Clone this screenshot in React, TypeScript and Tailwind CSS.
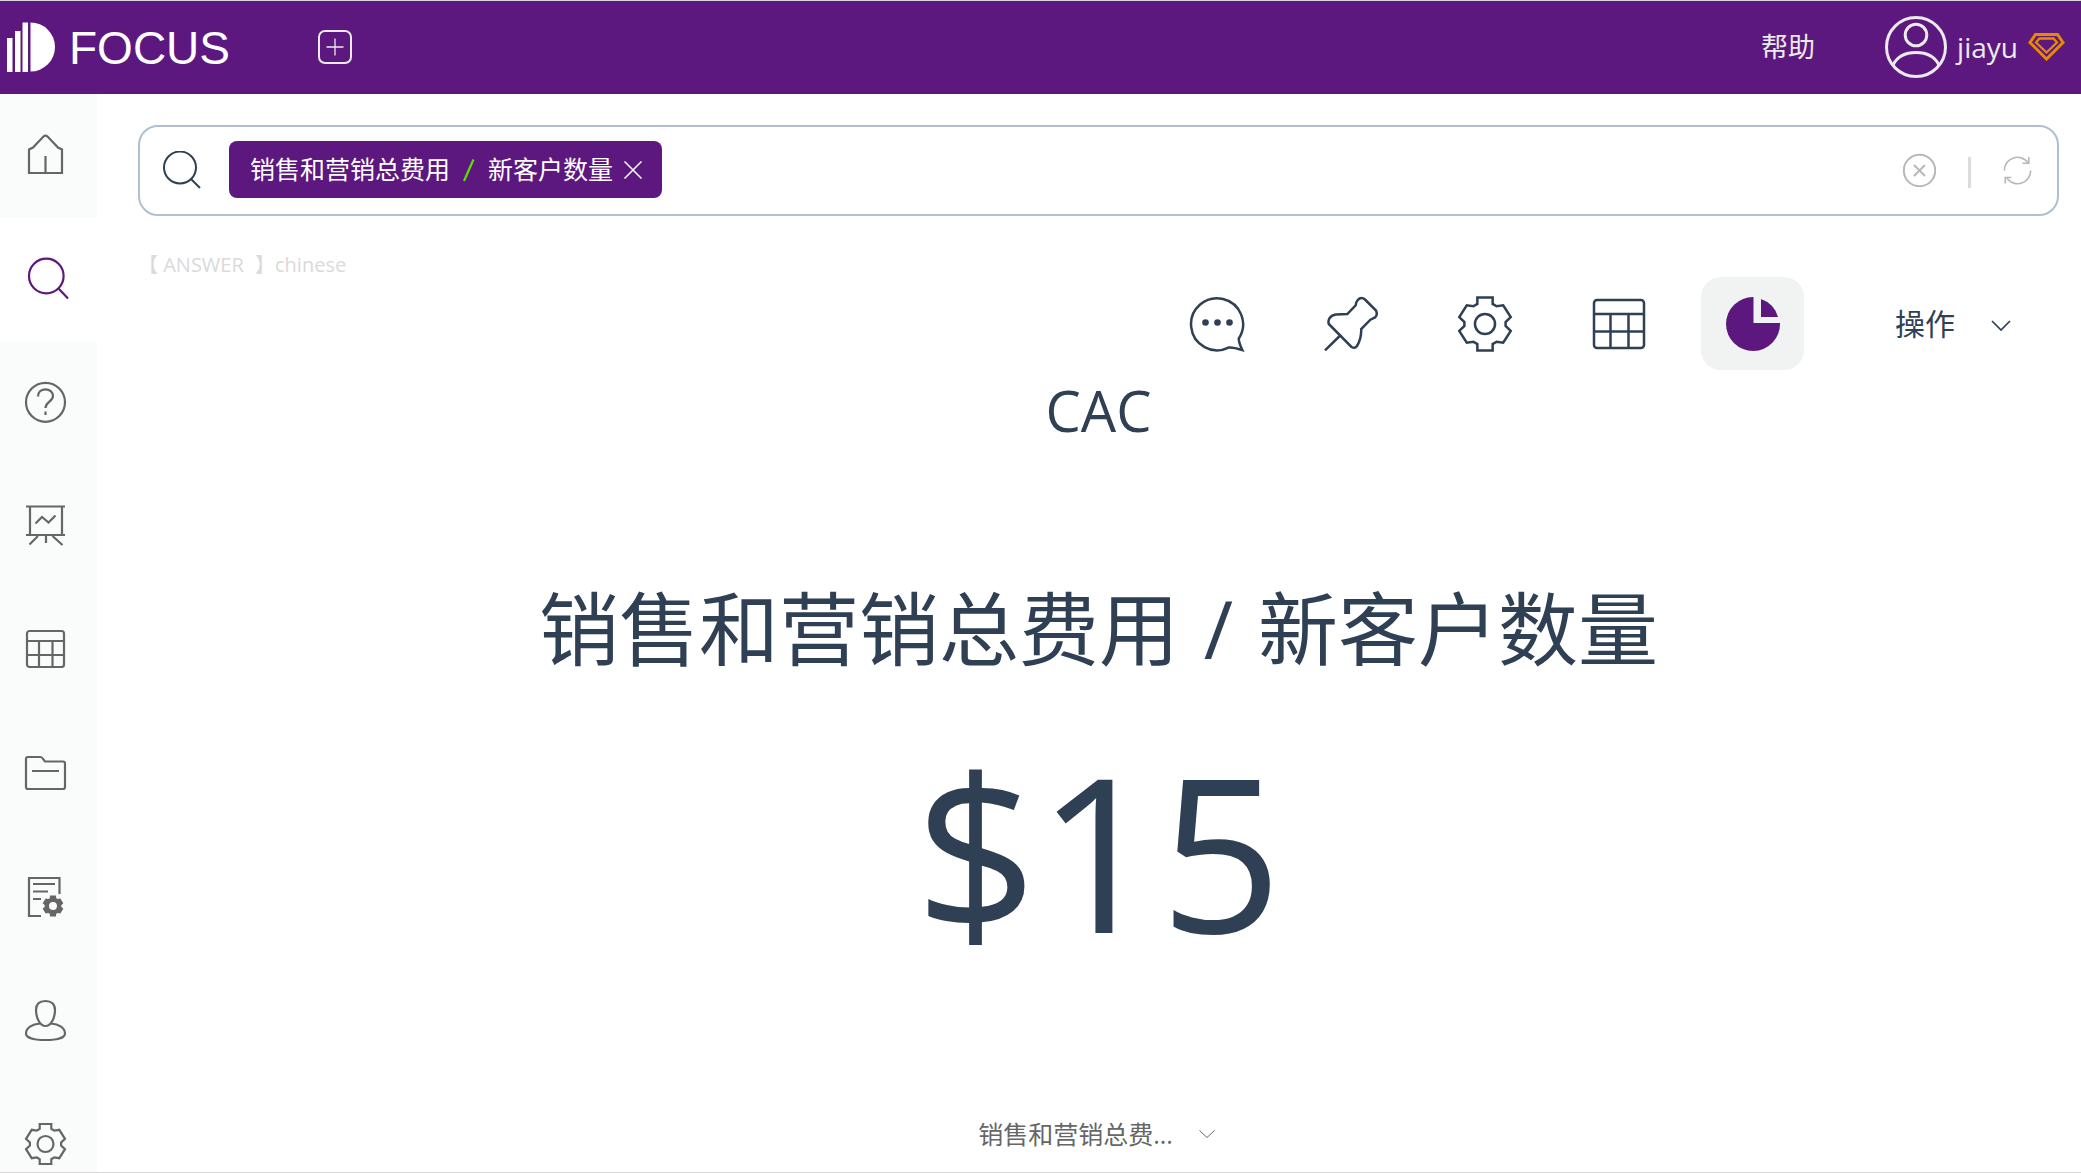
import React from "react";

const GEAR =
  "M-5.8 -20H5.8V-15.2L8.8 -13.4 13.8 -14.2 19.5 -5.2 15.6 -1.5V1.5L19.5 5.2 13.8 14.2 8.8 13.4 5.8 15.2V20H-5.8V15.2L-8.8 13.4 -13.8 14.2 -19.5 5.2 -15.6 1.5V-1.5L-19.5 -5.2 -13.8 -14.2 -8.8 -13.4 -5.8 -15.2Z";

type NavItem = { label: string; active?: boolean; icon: React.ReactNode };

const navItems: NavItem[] = [
  {
    label: "首页",
    icon: <path d="M5 39V15.5L9 13.5 19.5 2.5Q21.5 .5 23.5 2.5L34 13.5 38 15.5V39ZM21.5 39V22" />,
  },
  {
    label: "搜索",
    active: true,
    icon: (
      <>
        <circle cx="22.3" cy="18" r="17.3" />
        <path d="M34.3 30.2 44 40.5" />
      </>
    ),
  },
  {
    label: "帮助中心",
    icon: (
      <>
        <circle cx="21.5" cy="21.3" r="19.5" />
        <path d="M14 15.5C14 10.8 17.5 8.3 21.5 8.3S29 11 29 15C29 20.5 21.5 21 21.5 27M21.5 30.5V34" />
      </>
    ),
  },
  {
    label: "看板",
    icon: <path d="M2 1.5H41M6 1V30M38 1V30M2 30H41M14 31 5.5 39.5M28.5 31 38.5 40M22 31V38M11.5 18.5 18 12 24.5 17.5 31.5 10.5" />,
  },
  {
    label: "数据表",
    icon: (
      <>
        <rect x="3" y="2" width="37" height="36" rx="2.5" />
        <path d="M3 12H40M3 26H40M15 12V38M28.5 12V38" />
      </>
    ),
  },
  {
    label: "文件夹",
    icon: <path d="M2 7Q2 5 4 5H16.5Q18 5 19 7L21 9.5H39Q41 9.5 41 11.5V35Q41 37 39 37H4Q2 37 2 35ZM8 19H35" />,
  },
  {
    label: "任务管理",
    icon: (
      <>
        <path d="M35.5 18V2H5V40H17M9 8H31M9 15.5H24M9 23H17" />
        <g transform="translate(29 30) scale(0.53)" fill="currentColor" stroke="none">
          <path fillRule="evenodd" d={GEAR + "M7.5 0A7.5 7.5 0 1 0 -7.5 0 7.5 7.5 0 1 0 7.5 0Z"} />
        </g>
      </>
    ),
  },
  {
    label: "用户",
    icon: (
      <path d="M21.5 1C15.5 1 12 4 12 10C12 18 16 26 21.5 26S31 18 31 10C31 4 27.5 1 21.5 1ZM16 23.5C8 24 2 28 2 33.5C2 38 11 40 21.5 40S41 38 41 33.5C41 28 35 24 27 23.5" />
    ),
  },
  {
    label: "设置",
    icon: (
      <g transform="translate(21.5 21)">
        <path d={GEAR} />
        <circle r="8" />
      </g>
    ),
  },
];

const tools: NavItem[] = [
  {
    label: "评论",
    icon: (
      <>
        <path d="M49.8 42.5A26 26 0 1 0 39.5 51.6Q43.5 51 53.3 54Q49.5 46 49.8 42.5Z" />
        <g fill="currentColor" stroke="none">
          <circle cx="16.5" cy="26.5" r="3.3" />
          <circle cx="28.5" cy="26.5" r="3.3" />
          <circle cx="40.5" cy="26.5" r="3.3" />
        </g>
      </>
    ),
  },
  {
    label: "固定",
    icon: (
      <path d="M2 54.3 16.7 40M5.8 28C4.5 24 7 19 13 18.5L24.3 18 32.7 9.3C33 5 36 2 38.5 2Q40.3 2 42 3.5L53 14.5Q55 19 52 21.5L47.4 23.7 38.2 33C38.5 40 37 45 34 50Q32 53 28.5 51Z" />
    ),
  },
  {
    label: "图表设置",
    icon: (
      <g transform="translate(28 28) scale(1.32)" strokeWidth="1.9">
        <path d={GEAR} />
        <circle r="7.6" />
      </g>
    ),
  },
  {
    label: "表格",
    icon: (
      <>
        <rect x="3" y="4" width="50" height="48" rx="3" />
        <path d="M3 18H53M3 35.5H53M19.5 18V52M37.5 18V52" />
      </>
    ),
  },
  {
    label: "图表",
    active: true,
    icon: (
      <g fill="currentColor" stroke="none">
        <path d="M28.5 1V27H55A27 27 0 1 1 28.5 1Z" />
        <path d="M36 3A27 27 0 0 1 53 21H36Z" />
      </g>
    ),
  },
];

function Header() {
  return (
    <header className="flex h-[94px] shrink-0 items-center border-t border-[#d9d3e2] bg-[#5d187f] pr-4 pb-[2px] pl-[7px] text-[#ebebeb]">
      <a href="#" aria-label="FOCUS" className="flex items-center gap-3 text-white">
        <svg className="h-[50px] w-[50px]" viewBox="0 0 50 50" fill="currentColor" aria-hidden="true">
          <path d="M0 16H5.5V50H0ZM8 9H13.5V50H8ZM15.5 .5H21V50H15.5Z" />
          <path d="M23.5 0.5A24.5 24.5 0 0 1 23.5 49.5Z" />
        </svg>
        <span className="pt-[2px] font-['Liberation_Sans',sans-serif] text-[46px] leading-none">FOCUS</span>
      </a>
      <button type="button" aria-label="新建" className="ml-[88px]">
        <svg className="h-[34px] w-[34px]" viewBox="0 0 34 34" fill="none" stroke="currentColor" aria-hidden="true">
          <rect x="1" y="1" width="32" height="32" rx="6" strokeWidth="2" />
          <path d="M8.5 17H25.5M17 8.5V25.5" strokeWidth="1.3" />
        </svg>
      </button>
      <div className="ml-auto flex items-center">
        <a href="#" className="mr-[70px] text-[27px] leading-8">帮助</a>
        <button type="button" className="flex items-center gap-[10px]">
          <svg className="h-[62px] w-[62px]" viewBox="0 0 62 62" fill="none" stroke="currentColor" strokeWidth="3" aria-hidden="true">
            <circle cx="31" cy="31" r="29.5" />
            <circle cx="31" cy="19" r="10.8" />
            <path d="M8 49C12 41 20 36.5 31 36.5S50 41 54 49" />
          </svg>
          <span className="text-[28px] leading-8">jiayu</span>
          <svg className="h-7 w-[37px] text-[#e88a00]" viewBox="0 0 37 28" fill="none" stroke="currentColor" strokeWidth="3" aria-hidden="true">
            <path d="M7.5 1.5H29.5L35 9.5 18.5 26 2 9.5Z" />
            <path d="M11.5 5.5H25.5L29 9.5 18.5 19.5 8 9.5Z" strokeWidth="2.3" />
          </svg>
        </button>
      </div>
    </header>
  );
}

function Sidebar() {
  return (
    <nav aria-label="主导航" className="w-[97px] shrink-0 overflow-hidden bg-[#fafcfb]">
      <ul className="flex h-[1113px] flex-col">
        {navItems.map((item) => (
          <li key={item.label} className={item.active ? "flex flex-1 bg-white" : "flex flex-1"}>
            <a
              href="#"
              aria-label={item.label}
              className={item.active ? "flex flex-1 items-center pl-6 text-[#5d187f]" : "flex flex-1 items-center pl-6 text-[#666]"}
            >
              <svg className="h-11 w-11 overflow-visible" viewBox="0 0 44 44" fill="none" stroke="currentColor" strokeWidth="2.2" aria-hidden="true">
                {item.icon}
              </svg>
            </a>
          </li>
        ))}
      </ul>
    </nav>
  );
}

function SearchBar() {
  return (
    <form className="flex h-[91px] shrink-0 items-center rounded-[20px] border-2 border-[#b0c0d0] pr-[25px] pb-[2px] pl-[23px]">
      <svg className="h-[38px] w-[38px] text-[#2f4055]" viewBox="0 0 38 38" fill="none" stroke="currentColor" strokeWidth="2" aria-hidden="true">
        <circle cx="17" cy="16.5" r="16" />
        <path d="M28 28 37 37" />
      </svg>
      <div className="ml-7 flex h-[57px] items-center rounded-lg bg-[#5d187f] pr-5 pl-[21px] text-[25px] text-white">
        <span>销售和营销总费用</span>
        <svg className="mx-[13px] h-6 w-3" viewBox="0 0 12 24" fill="none" stroke="#59e000" strokeWidth="2.2" role="img" aria-label="/">
          <path d="M1 23 10.5 1.5" />
        </svg>
        <span>新客户数量</span>
        <button type="button" aria-label="移除" className="ml-[11px]">
          <svg className="h-[18px] w-[18px]" viewBox="0 0 18 18" fill="none" stroke="currentColor" strokeWidth="1.5" aria-hidden="true">
            <path d="M.5 .5 17.5 17.5M17.5 .5 .5 17.5" />
          </svg>
        </button>
      </div>
      <input type="text" aria-label="搜索" className="h-14 min-w-0 flex-1 px-3 text-[25px] outline-none" />
      <button type="button" aria-label="清空" className="text-[#b8b8b8]">
        <svg className="h-[34px] w-[34px]" viewBox="0 0 34 34" fill="none" stroke="currentColor" strokeWidth="2" aria-hidden="true">
          <circle cx="17.5" cy="17.5" r="15.7" />
          <path d="M12 12 23 23M23 12 12 23" />
        </svg>
      </button>
      <span className="mt-[6px] mr-8 ml-8 h-[31px] w-[3px] bg-[#dcdcdc]" />
      <button type="button" aria-label="刷新" className="mt-[2px] text-[#b8b8b8]">
        <svg className="h-[29px] w-[29px]" viewBox="0 0 29 29" fill="none" stroke="currentColor" strokeWidth="1.6" aria-hidden="true">
          <path d="M1.3 14.5A13.2 13.2 0 0 1 25 6.5M25.8 1V7.3H19.5M27.7 14.5A13.2 13.2 0 0 1 4 22.5M2.2 27.5V21.5H8.5" />
        </svg>
      </button>
    </form>
  );
}

function Toolbar() {
  return (
    <div className="flex items-center justify-end pr-12 text-[#2f4055]">
      <div className="flex gap-[31px]">
        {tools.map((tool) => (
          <button
            key={tool.label}
            type="button"
            aria-label={tool.label}
            className={
              tool.active
                ? "grid h-[93px] w-[103px] place-items-center rounded-[20px] bg-[#f1f3f3] text-[#5d187f]"
                : "grid h-[93px] w-[103px] place-items-center"
            }
          >
            <svg className="h-14 w-14" viewBox="0 0 56 56" fill="none" stroke="currentColor" strokeWidth="2.5" aria-hidden="true">
              {tool.icon}
            </svg>
          </button>
        ))}
      </div>
      <button type="button" className="ml-[91px] flex items-center gap-9 text-[30px] leading-10">
        操作
        <svg className="mt-1 h-[11px] w-5" viewBox="0 0 20 11" fill="none" stroke="currentColor" strokeWidth="1.7" aria-hidden="true">
          <path d="M1 1 10 10 19 1" />
        </svg>
      </button>
    </div>
  );
}

export default function App() {
  return (
    <div className="flex h-screen flex-col overflow-hidden border-b border-[#d9d9d9] bg-white font-['Open_Sans','Noto_Sans_CJK_SC',sans-serif]">
      <Header />
      <div className="flex min-h-0 flex-1">
        <Sidebar />
        <main className="flex min-w-0 flex-1 flex-col pt-[31px] pr-[22px] pl-[41px]">
          <SearchBar />
          <p className="mt-9 text-[20px] leading-[25px] text-[#dadada]">
            【<span className="mr-1.5"> ANSWER</span> 】chinese
          </p>
          <Toolbar />
          <section className="flex flex-1 flex-col items-center text-[#2f4055]">
            <h1 className="text-[56px] leading-[80px]">CAC</h1>
            <h2 className="mt-[122px] text-[80px] leading-[112px] whitespace-nowrap">
              销售和营销总费用<span className="mx-1 font-medium"> / </span>新客户数量
            </h2>
            <p className="mt-10 text-[214px] leading-[252px]">$15</p>
            <button type="button" className="mt-auto mb-5 flex items-center gap-[26px] pr-1 text-[25px] leading-9 text-[#666]">
              销售和营销总费...
              <svg className="h-2 w-4" viewBox="0 0 16 8" fill="none" stroke="currentColor" aria-hidden="true">
                <path d="M.5 .5 8 7.5 15.5 .5" />
              </svg>
            </button>
          </section>
        </main>
      </div>
    </div>
  );
}
